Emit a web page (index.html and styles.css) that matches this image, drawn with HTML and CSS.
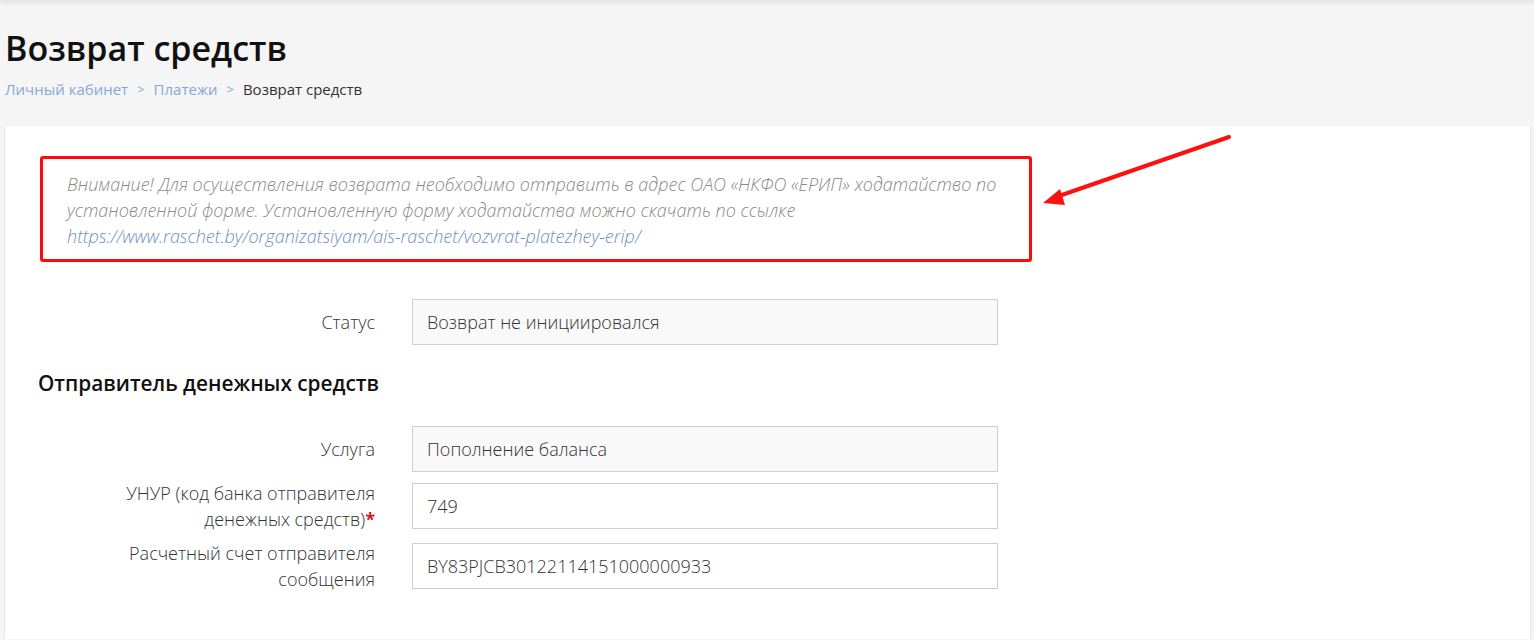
FILE: index.html
```html
<!DOCTYPE html>
<html lang="ru">
<head>
<meta charset="utf-8">
<title>Возврат средств</title>
<link rel="stylesheet" href="styles.css">
</head>
<body>
<div class="topbar"></div>
<main class="page">
  <h1 class="title">Возврат средств</h1>
  <nav class="crumbs">
    <a href="#" class="crumb-link">Личный кабинет</a>
    <span class="crumb-sep">&gt;</span>
    <a href="#" class="crumb-link">Платежи</a>
    <span class="crumb-sep">&gt;</span>
    <span class="crumb-current">Возврат средств</span>
  </nav>
  <section class="card">
    <div class="notice">
      Внимание! Для осуществления возврата необходимо отправить в адрес ОАО «НКФО «ЕРИП» ходатайство по установленной форме. Установленную форму ходатайства можно скачать по ссылке <a href="#" class="notice-link">https://www.raschet.by/organizatsiyam/ais-raschet/vozvrat-platezhey-erip/</a>
    </div>
    <svg class="arrow" width="210" height="84" viewBox="0 0 210 84" aria-hidden="true">
      <line x1="197" y1="11" x2="24" y2="71" stroke="#ff1010" stroke-width="4" stroke-linecap="round"/>
      <polygon points="11,77 28,63 33,79" fill="#ff1010"/>
    </svg>

    <div class="form-row first">
      <div class="label">Статус</div>
      <div class="field readonly">Возврат не инициировался</div>
    </div>

    <h2 class="section-title">Отправитель денежных средств</h2>

    <div class="rows">
      <div class="form-row">
        <div class="label">Услуга</div>
        <div class="field readonly">Пополнение баланса</div>
      </div>
      <div class="form-row">
        <div class="label">УНУР (код банка отправителя<br>денежных средств)<span class="req">*</span></div>
        <div class="field">749</div>
      </div>
      <div class="form-row">
        <div class="label">Расчетный счет отправителя<br>сообщения</div>
        <div class="field">BY83PJCB30122114151000000933</div>
      </div>
    </div>
  </section>
</main>
</body>
</html>
```

FILE: styles.css
```css
* { box-sizing: border-box; }
html, body { margin: 0; padding: 0; }
body {
  background: #f5f5f5;
  font-family: "Open Sans", "Noto Sans", sans-serif;
  color: #333;
  overflow: hidden;
}
.topbar {
  height: 2px;
  background: #e8e8e8;
  box-shadow: 0 1px 4px rgba(0,0,0,0.12);
}
.page {
  padding: 0 4px 0 5px;
}
.title {
  margin: 0;
  padding-top: 25px;
  font-size: 34px;
  line-height: 42px;
  font-weight: 600;
  color: #111;
}
.crumbs {
  margin-top: 9px;
  font-size: 15px;
  line-height: 22px;
  display: flex;
  align-items: center;
  gap: 9px;
}
.crumb-link {
  color: #86a8d4;
  text-decoration: none;
}
.crumb-sep {
  color: #8fa6c8;
  font-size: 13px;
}
.crumb-current { color: #333; }
.card {
  position: relative;
  margin-top: 26px;
  background: #fff;
  height: 513px;
  box-shadow: 0 1px 2px rgba(0,0,0,0.18);
  padding: 30px 0 0 35px;
}
.notice {
  width: 992px;
  border: 3px solid #ff0a0a;
  border-radius: 3px;
  padding: 12px 24px 10px 24px;
  font-size: 18px;
  font-weight: 300;
  line-height: 26px;
  font-style: italic;
  color: #8a8a8a;
}
.notice-link {
  color: #6e90c6;
  text-decoration: none;
}
.arrow {
  position: absolute;
  left: 1027px;
  top: 0;
}
.form-row {
  display: grid;
  grid-template-columns: 335px 586px;
  column-gap: 37px;
  align-items: center;
  margin-left: -35px;
  padding-left: 35px;
}
.form-row.first { margin-top: 37px; }
.label {
  text-align: right;
  font-size: 18px;
  font-weight: 300;
  line-height: 26px;
  color: #333;
}
.req {
  color: #e0141e;
  font-weight: 700;
}
.field {
  height: 46px;
  border: 1px solid #cfcfcf;
  background: #fff;
  padding: 0 14px;
  display: flex;
  align-items: center;
  font-size: 18px;
  font-weight: 300;
  color: #333;
}
.field.readonly { background: #f9f9f9; }
.section-title {
  margin: 25px 0 30px -2px;
  font-size: 20.8px;
  line-height: 26px;
  font-weight: 600;
  color: #111;
}
.rows {
  display: flex;
  flex-direction: column;
  gap: 8px;
}
```
